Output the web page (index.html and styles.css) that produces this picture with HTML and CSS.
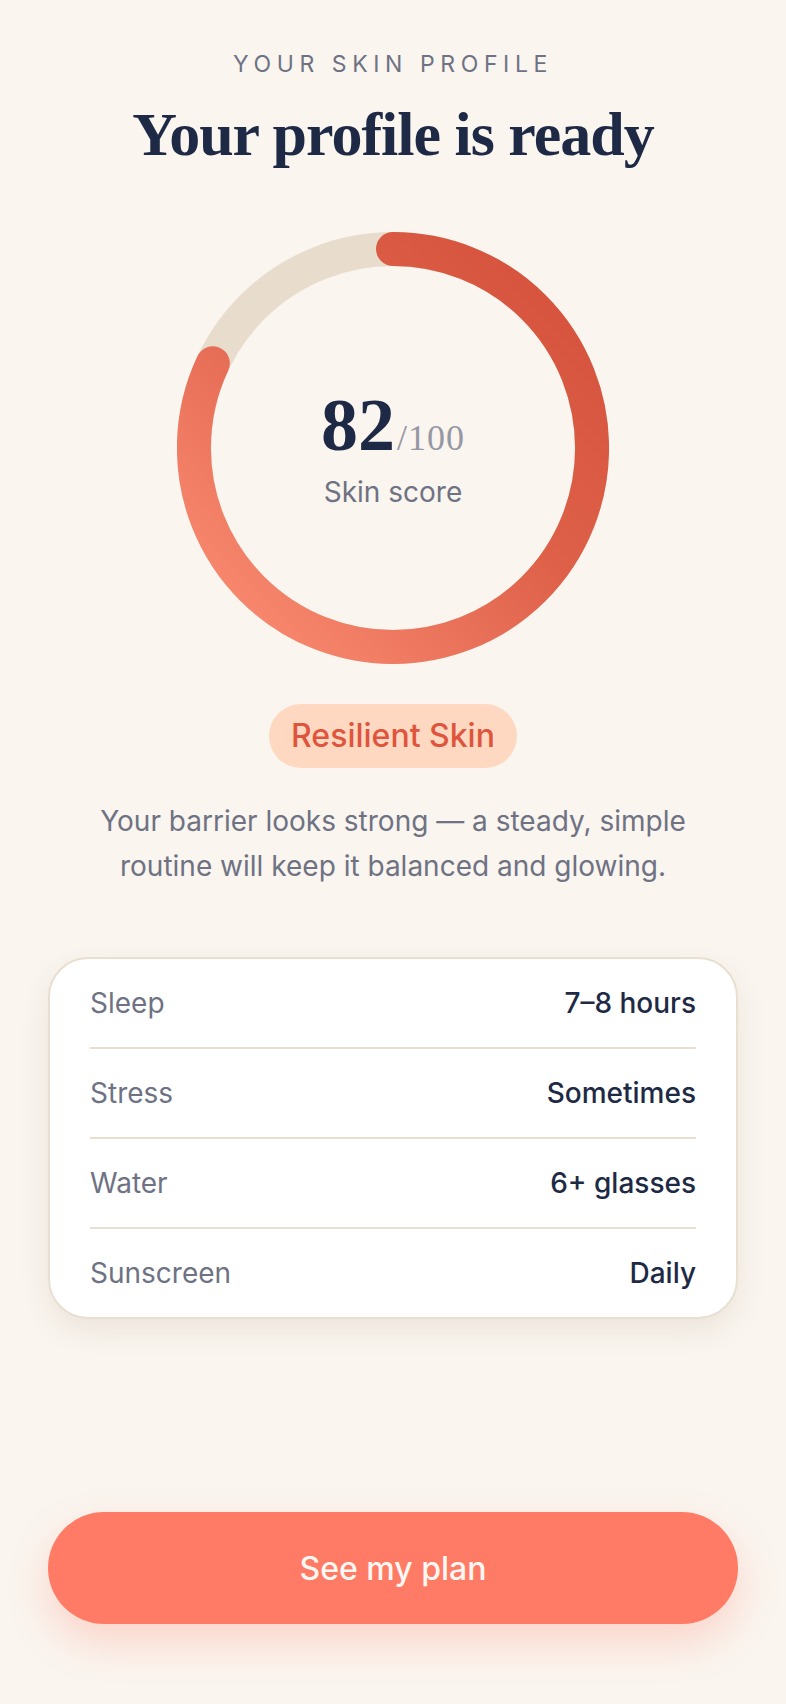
FILE: index.html
```html
<!DOCTYPE html>
<html lang="en">
<head>
<meta charset="utf-8">
<title>Your skin profile</title>
<link rel="stylesheet" href="styles.css">
</head>
<body>
<main class="screen">
  <header class="intro">
    <p class="eyebrow">Your skin profile</p>
    <h1 class="title">Your profile is ready</h1>
  </header>

  <section class="score">
    <svg class="ring" width="432" height="432" viewBox="0 0 432 432" aria-hidden="true">
      <defs>
        <linearGradient id="ringGrad" gradientUnits="userSpaceOnUse" x1="400" y1="40" x2="40" y2="400">
          <stop offset="0" stop-color="#D5523C"/>
          <stop offset="0.45" stop-color="#DF614A"/>
          <stop offset="1" stop-color="#FA8C72"/>
        </linearGradient>
      </defs>
      <circle class="ring-track" cx="216" cy="216" r="199"/>
      <path class="ring-progress" pathLength="100" stroke-dasharray="82 100"
            d="M216 17 A199 199 0 1 1 216 415 A199 199 0 1 1 216 17"/>
    </svg>
    <div class="score-center">
      <p class="score-value"><span class="score-num">82</span><span class="score-max">/100</span></p>
      <p class="score-label">Skin score</p>
    </div>
  </section>

  <span class="badge">Resilient Skin</span>

  <p class="summary">Your barrier looks strong — a steady, simple routine will keep it balanced and glowing.</p>

  <dl class="facts">
    <div class="fact"><dt>Sleep</dt><dd>7–8 hours</dd></div>
    <div class="fact"><dt>Stress</dt><dd>Sometimes</dd></div>
    <div class="fact"><dt>Water</dt><dd>6+ glasses</dd></div>
    <div class="fact"><dt>Sunscreen</dt><dd>Daily</dd></div>
  </dl>

  <button class="cta" type="button">See my plan</button>
</main>
</body>
</html>
```

FILE: styles.css
```css
html, body {
  margin: 0;
  padding: 0;
  background: #FAF5EF;
}

body {
  font-family: "Inter", "Noto Sans", sans-serif;
  color: #1E2A45;
}

.screen {
  box-sizing: border-box;
  min-height: 1704px;
  display: flex;
  flex-direction: column;
  align-items: center;
  padding: 50px 48px 80px;
}

.intro {
  display: flex;
  flex-direction: column;
  align-items: center;
}

.eyebrow {
  margin: 0;
  font-size: 23px;
  line-height: 28px;
  font-weight: 400;
  letter-spacing: 5.6px;
  text-transform: uppercase;
  color: #6E7283;
}

.title {
  margin: 20px 0 0;
  font-family: "Liberation Serif", "DejaVu Serif", serif;
  font-size: 62px;
  line-height: 72px;
  font-weight: 700;
  letter-spacing: -1px;
  color: #1E2A45;
}

.score {
  position: relative;
  margin-top: 62px;
  width: 432px;
  height: 432px;
}

.ring {
  display: block;
}

.ring-track {
  fill: none;
  stroke: #E8DDCC;
  stroke-width: 34;
}

.ring-progress {
  fill: none;
  stroke: url(#ringGrad);
  stroke-width: 34;
  stroke-linecap: round;
}

.score-center {
  position: absolute;
  inset: 0;
  display: flex;
  flex-direction: column;
  align-items: center;
  justify-content: center;
  gap: 12px;
  padding-top: 2px;
}

.score-value {
  margin: 0;
  display: flex;
  align-items: baseline;
  font-family: "Liberation Serif", "DejaVu Serif", serif;
  white-space: nowrap;
}

.score-num {
  font-size: 74px;
  line-height: 1;
  font-weight: 700;
  color: #1E2A45;
}

.score-max {
  font-size: 36px;
  line-height: 1;
  font-weight: 400;
  letter-spacing: 1px;
  color: #9698A4;
  margin-left: 2px;
}

.score-label {
  margin: 0;
  font-size: 28px;
  line-height: 36px;
  color: #6E7283;
}

.badge {
  margin-top: 40px;
  padding: 12px 22px;
  border-radius: 999px;
  background: #FFD8C1;
  color: #DF543D;
  font-size: 32px;
  line-height: 40px;
  font-weight: 500;
}

.summary {
  margin: 31px 0 0;
  max-width: 640px;
  text-align: center;
  font-size: 28px;
  line-height: 44.8px;
  color: #6E7283;
}

.facts {
  align-self: stretch;
  margin: 68px 0 0;
  padding: 0 40px;
  background: #FFFFFF;
  border: 2px solid #E9DFD0;
  border-radius: 40px;
  box-shadow: 0 12px 30px rgba(90, 65, 35, 0.09);
}

.fact {
  display: flex;
  justify-content: space-between;
  align-items: center;
  padding: 22px 0;
  border-bottom: 2px solid #EADFCF;
  font-size: 28px;
  line-height: 44px;
}

.fact:last-child {
  border-bottom: none;
}

.fact dt {
  color: #6E7283;
}

.fact dd {
  margin: 0;
  font-weight: 500;
  color: #1E2A45;
}

.cta {
  margin-top: auto;
  align-self: stretch;
  height: 112px;
  border: none;
  border-radius: 56px;
  background: #FF7B65;
  color: #FFF7F2;
  font-family: "Inter", "Noto Sans", sans-serif;
  font-size: 32px;
  font-weight: 500;
  box-shadow: 0 18px 40px rgba(255, 120, 95, 0.26);
}
```
